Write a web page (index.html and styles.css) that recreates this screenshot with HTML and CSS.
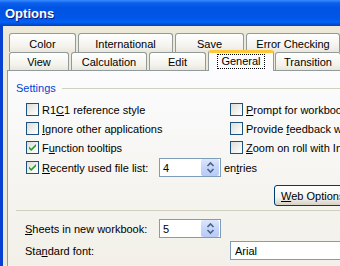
FILE: index.html
```html
<!DOCTYPE html>
<html>
<head>
<meta charset="utf-8">
<link rel="stylesheet" href="styles.css">
</head>
<body>
<div class="window">
  <div class="titlebar"><span class="title">Options</span></div>
  <div class="frame">
    <div class="tabrow row1">
      <div class="tab t-color">Color</div>
      <div class="tab t-intl">International</div>
      <div class="tab t-save">Save</div>
      <div class="tab t-err">Error Checking</div>
    </div>
    <div class="tabrow row2">
      <div class="tab t-view">View</div>
      <div class="tab t-calc">Calculation</div>
      <div class="tab t-edit">Edit</div>
      <div class="tab t-gen selected"><span class="focus">General</span></div>
      <div class="tab t-trans">Transition</div>
    </div>
    <div class="panel">
      <div class="group-head"><span class="group-label">Settings</span><span class="group-line"></span></div>
      <div class="settings">
        <label class="chk"><span class="box"></span><span>R1<u>C</u>1 reference style</span></label>
        <label class="chk"><span class="box"></span><span><u>P</u>rompt for workbook properties</span></label>
        <label class="chk"><span class="box"></span><span><u>I</u>gnore other applications</span></label>
        <label class="chk"><span class="box"></span><span>Provide <u>f</u>eedback with sound</span></label>
        <label class="chk"><span class="box checked"><svg viewBox="0 0 11 11" width="11" height="11"><path d="M2 4.5 L4.2 6.8 L9 2 L9 4.2 L4.2 9 L2 6.8 Z" fill="#21A121"/></svg></span><span>F<u>u</u>nction tooltips</span></label>
        <label class="chk"><span class="box"></span><span><u>Z</u>oom on roll with IntelliMouse</span></label>
        <div class="recent">
          <label class="chk"><span class="box checked"><svg viewBox="0 0 11 11" width="11" height="11"><path d="M2 4.5 L4.2 6.8 L9 2 L9 4.2 L4.2 9 L2 6.8 Z" fill="#21A121"/></svg></span><span><u>R</u>ecently used file list:</span></label>
          <div class="spin"><span class="spin-val">4</span><span class="spin-btn"><svg viewBox="0 0 17 17" width="17" height="17"><path d="M5.5 7 L8.5 4 L11.5 7" fill="none" stroke="#4D6185" stroke-width="1.6"/><path d="M5.5 10 L8.5 13 L11.5 10" fill="none" stroke="#4D6185" stroke-width="1.6"/></svg></span></div>
          <span class="entries">en<u>t</u>ries</span>
        </div>
      </div>
      <div class="btn-row"><button class="btn"><u>W</u>eb Options...</button></div>
      <div class="sep"></div>
      <div class="sheets">
        <span><u>S</u>heets in new workbook:</span>
        <div class="spin"><span class="spin-val">5</span><span class="spin-btn"><svg viewBox="0 0 17 17" width="17" height="17"><path d="M5.5 7 L8.5 4 L11.5 7" fill="none" stroke="#4D6185" stroke-width="1.6"/><path d="M5.5 10 L8.5 13 L11.5 10" fill="none" stroke="#4D6185" stroke-width="1.6"/></svg></span></div>
      </div>
      <div class="font-row">
        <span>Sta<u>n</u>dard font:</span>
        <div class="combo">Arial</div>
      </div>
    </div>
  </div>
</div>
</body>
</html>
```
FILE: styles.css
```css
html, body { margin: 0; padding: 0; }
body {
  width: 340px;
  height: 266px;
  overflow: hidden;
  background: #ECE9D8;
  font-family: "Liberation Sans", Arial, sans-serif;
  font-size: 11px;
  color: #000;
}
.window { width: 420px; }
.titlebar {
  height: 26px;
  box-sizing: border-box;
  padding-left: 5px;
  display: flex;
  align-items: center;
  background: linear-gradient(#3A8CFF 0px, #0A60EE 3px, #0054E3 8px, #0056E8 18px, #0062F5 22px, #0050D8 24px, #0A3FB8 26px);
}
.title {
  color: #fff;
  font-weight: bold;
  font-size: 13px;
  text-shadow: 1px 1px 0 #0A1E7A;
  margin-top: 1px;
}
.frame {
  border-left: 3px solid #0840D0;
  padding: 7px 0 0 4px;
  background: #ECE9D8;
  height: 260px;
}
.tabrow {
  display: flex;
  gap: 2px;
  padding-left: 2px;
}
.row1 { margin-bottom: -2px; }
.row1 .tab { height: 19px; }
.row2 {
  align-items: flex-end;
  margin-bottom: -1px;
}
.row2 .tab { height: 18px; margin-bottom: 1px; }
.tab {
  box-sizing: border-box;
  border: 1px solid #919B9C;
  border-bottom: none;
  border-radius: 3px 3px 0 0;
  background: linear-gradient(#FFFFFF, #F3F2EC 70%, #E8E6DC);
  display: flex;
  align-items: center;
  justify-content: center;
  padding-top: 1px;
}
.t-color { width: 67px; }
.t-intl { width: 95px; }
.t-save { width: 69px; }
.t-err { width: 94px; }
.t-view { width: 60px; }
.t-calc { width: 76px; }
.t-edit { width: 57px; }
.t-trans { width: 66px; margin-left: -1px; }
.row2 .tab.selected {
  width: 66px;
  height: 21px;
  margin-bottom: 0;
  border-top: 3px solid #FFC83C;
  background: #FCFCFE;
  position: relative;
  z-index: 1;
  padding-top: 0;
  padding-bottom: 1px;
}
.focus {
  border: 1px dotted #000;
  padding: 0 3px;
  line-height: 13px;
}
.panel {
  box-sizing: border-box;
  border: 1px solid #919B9C;
  background: linear-gradient(#FCFCFE, #F4F3EE 60%, #F1EFE6);
  height: 220px;
  padding: 10px 0 0 8px;
}
.group-head {
  display: flex;
  align-items: center;
  height: 14px;
}
.group-label { color: #0046D5; margin-right: 6px; }
.group-line { flex: 1; border-top: 1px solid #D0D0BF; }
.settings {
  margin-top: 5px;
  padding-left: 10px;
  display: grid;
  grid-template-columns: 204px auto;
  grid-auto-rows: 19px;
}
.chk {
  display: flex;
  align-items: center;
  gap: 3px;
  white-space: nowrap;
}
.box {
  box-sizing: border-box;
  width: 13px;
  height: 13px;
  border: 1px solid #1C5180;
  background: linear-gradient(135deg, #DCDCD7, #F6F6F4 70%, #FFFFFF);
  display: flex;
  align-items: center;
  justify-content: center;
}
.recent {
  grid-column: 1 / 3;
  height: 21px;
  display: grid;
  grid-template-columns: 133px 62px auto;
  align-items: center;
}
.spin {
  box-sizing: border-box;
  width: 62px;
  height: 19px;
  border: 1px solid #7F9DB9;
  background: #fff;
  display: flex;
  align-items: center;
  justify-content: space-between;
  padding-right: 1px;
}
.spin-val { padding-left: 3px; }
.spin-btn {
  width: 18px;
  height: 17px;
  border-radius: 2px;
  background: linear-gradient(#DDE7FC, #C4D5FA 50%, #B7CBF6);
  display: flex;
  align-items: center;
  justify-content: center;
}
.entries { padding-left: 3px; }
.btn-row {
  margin-top: 9px;
  padding-left: 258px;
  height: 21px;
}
.btn {
  box-sizing: border-box;
  height: 21px;
  width: 90px;
  border: 1px solid #003C74;
  border-radius: 3px;
  background: linear-gradient(#FFFFFF, #F4F3EE 60%, #D6D0C5);
  font-family: inherit;
  font-size: 11px;
  color: #000;
  padding: 0 0 0 6px;
  text-align: left;
  white-space: nowrap;
}
.sep {
  margin-top: 4px;
  border-top: 1px solid #D0D0BF;
}
.sheets {
  margin-top: 8px;
  padding-left: 9px;
  display: grid;
  grid-template-columns: 134px 62px;
  align-items: center;
  height: 19px;
}
.font-row {
  margin-top: 3px;
  padding-left: 9px;
  display: grid;
  grid-template-columns: 205px 150px;
  align-items: center;
  height: 19px;
}
.combo {
  box-sizing: border-box;
  height: 19px;
  border: 1px solid #7F9DB9;
  background: #fff;
  padding-left: 4px;
  display: flex;
  align-items: center;
}
```
